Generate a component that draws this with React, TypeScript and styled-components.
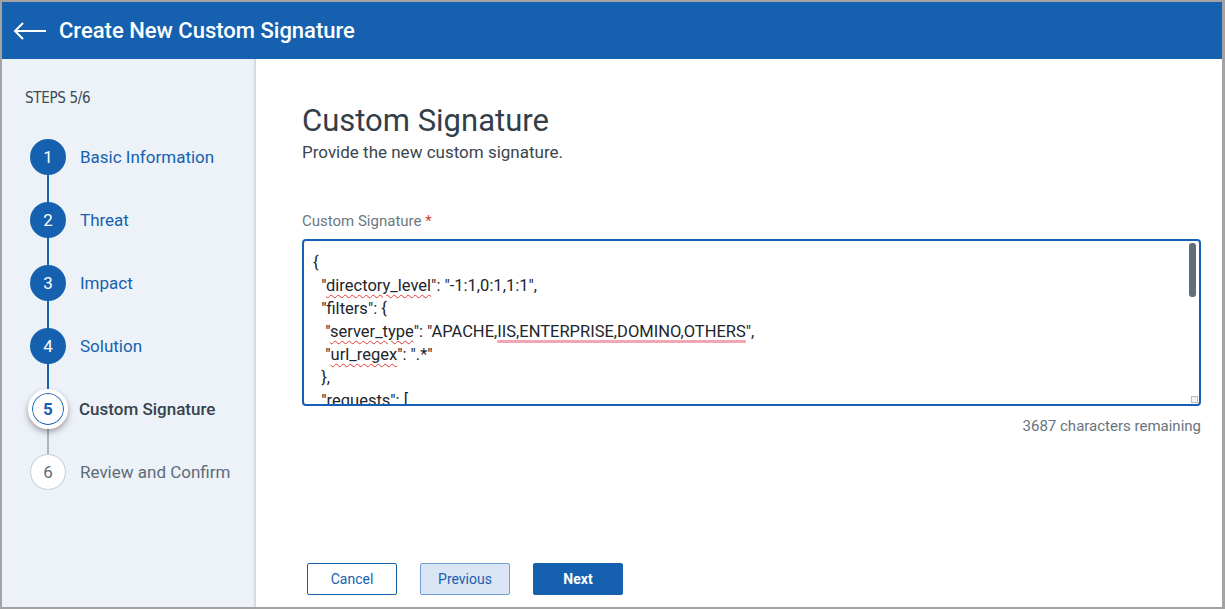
import React from "react";
import styled, { createGlobalStyle } from "styled-components";

const Global = createGlobalStyle`
  html, body { margin: 0; padding: 0; }
  body { font-family: Roboto, "Liberation Sans", sans-serif; background: #fff; }
`;

const Frame = styled.div`
  width: 1225px; height: 609px; box-sizing: border-box;
  border: 2px solid #a3a3a3; border-right-width: 3px;
  display: flex; flex-direction: column; overflow: hidden;
`;
const Header = styled.header`
  height: 57px; background: #1561b0; color: #fff;
  display: flex; align-items: center; gap: 12px; padding-left: 11px;
  font-size: 22px; font-weight: 500; flex-shrink: 0;
`;
const Body = styled.div`display: flex; flex: 1; min-height: 0;`;
const Sidebar = styled.aside`
  width: 254px; background: #edf2f9; flex-shrink: 0;
  box-shadow: inset -3px 0 3px -2px rgba(0,0,0,0.18);
  padding: 30px 0 0 23px; box-sizing: border-box;
`;
const StepsLabel = styled.div`
  font-family: "Liberation Sans Narrow", "DejaVu Sans Condensed", sans-serif;
  font-size: 15px; color: #3c4a55; letter-spacing: -0.3px; margin-bottom: 18px;
`;
const StepList = styled.div`display: flex; flex-direction: column;`;
const Step = styled.div`
  position: relative; display: flex; align-items: center; height: 63px;
`;
const Connector = styled.div<{ $done: boolean }>`
  position: absolute; left: 22px; top: 50%; height: 63px; width: 2px;
  background: ${p => (p.$done ? "#1561b0" : "#aab6c0")};
`;
const Circle = styled.div<{ $state: "done" | "active" | "todo" }>`
  position: relative; z-index: 1;
  width: ${p => (p.$state === "active" ? 40 : 36)}px;
  height: ${p => (p.$state === "active" ? 40 : 36)}px;
  margin-left: ${p => (p.$state === "active" ? 3 : 5)}px;
  margin-right: ${p => (p.$state === "active" ? 11 : 14)}px;
  border-radius: 50%; box-sizing: border-box;
  display: flex; align-items: center; justify-content: center; font-size: 17px;
  background: ${p => (p.$state === "done" ? "#1561b0" : "#fff")};
  color: ${p => (p.$state === "done" ? "#fff" : p.$state === "active" ? "#1561b0" : "#5d6c78")};
  border: ${p => (p.$state === "done" ? "none" : p.$state === "active" ? "4px solid #fff" : "1px solid #c2ccd4")};
  font-weight: ${p => (p.$state === "active" ? 700 : 400)};
  box-shadow: ${p => (p.$state === "active" ? "0 0 0 1px #1561b0 inset, 0 3px 6px rgba(0,0,0,0.35)" : "none")};
`;
const StepText = styled.span<{ $state: "done" | "active" | "todo" }>`
  font-size: 17px;
  color: ${p => (p.$state === "done" ? "#1561b0" : p.$state === "active" ? "#36434d" : "#5d6c78")};
  font-weight: ${p => (p.$state === "active" ? 500 : 400)};
`;
const Main = styled.main`
  flex: 1; padding: 42px 21px 0 46px; display: flex; flex-direction: column;
`;
const Title = styled.h1`
  margin: 0; font-size: 31px; font-weight: 400; color: #333e48; line-height: 40px;
`;
const Sub = styled.p`margin: 0; font-size: 17px; color: #3a454f; line-height: 22px;`;
const Label = styled.label`
  margin-top: 49px; font-size: 15px; color: #6b7883; display: block; margin-bottom: 9px;
  span { color: #d83b2b; }
`;
const Editor = styled.div`
  position: relative; height: 167px; box-sizing: border-box; flex-shrink: 0;
  border: 2px solid #1560b5; border-radius: 4px; overflow: hidden;
  padding: 10px 30px 0 9px; font-size: 16.5px; line-height: 23px; color: #1e252b;
  white-space: pre;
`;
const Wavy = styled.span`
  text-decoration: underline wavy #e53935; text-decoration-thickness: 1px; text-underline-offset: 3px;
`;
const Grammar = styled.span`
  text-decoration: underline #f2a5b3; text-decoration-thickness: 3px; text-underline-offset: 3px;
`;
const Scrollbar = styled.div`
  position: absolute; right: 3px; top: 2px; width: 7px; height: 54px;
  border-radius: 3px; background: #5f707c;
`;
const Grip = styled.div`
  position: absolute; right: 1px; bottom: 1px; width: 5px; height: 5px;
  border: 1px solid #bbb; background: #f4f4f4;
`;
const Counter = styled.div`
  text-align: right; font-size: 15px; color: #67747f; margin-top: 11px;
`;
const Buttons = styled.div`
  margin-top: auto; margin-bottom: 12px; display: flex; gap: 23px; padding-left: 5px;
`;
const Btn = styled.button<{ $kind: "outline" | "soft" | "primary" }>`
  width: 90px; height: 32px; border-radius: 2px; font-family: Roboto, sans-serif; font-size: 14px;
  border: 1px solid ${p => (p.$kind === "soft" ? "#6d9fd6" : "#1561b0")};
  background: ${p => (p.$kind === "primary" ? "#1561b0" : p.$kind === "soft" ? "#dae6f5" : "#fff")};
  color: ${p => (p.$kind === "primary" ? "#fff" : "#1a5fae")};
  font-weight: ${p => (p.$kind === "primary" ? 700 : 400)};
`;

const steps = ["Basic Information", "Threat", "Impact", "Solution", "Custom Signature", "Review and Confirm"];

export default function App() {
  return (
    <>
      <Global />
      <Frame>
        <Header>
          <svg width="34" height="18" viewBox="0 0 34 18" fill="none" stroke="#fff" strokeWidth="2">
            <path d="M33 9H2M10 1L2 9l8 8" />
          </svg>
          Create New Custom Signature
        </Header>
        <Body>
          <Sidebar>
            <StepsLabel>STEPS 5/6</StepsLabel>
            <StepList>
              {steps.map((s, i) => {
                const state = i < 4 ? "done" : i === 4 ? "active" : "todo";
                return (
                  <Step key={s}>
                    {i < 5 && <Connector $done={i < 4} />}
                    <Circle $state={state}>{i + 1}</Circle>
                    <StepText $state={state}>{s}</StepText>
                  </Step>
                );
              })}
            </StepList>
          </Sidebar>
          <Main>
            <Title>Custom Signature</Title>
            <Sub>Provide the new custom signature.</Sub>
            <Label>Custom Signature <span>*</span></Label>
            <Editor>
              {"{\n  \""}<Wavy>directory_level</Wavy>{"\": \"-1:1,0:1,1:1\",\n  \"filters\": {\n   \""}
              <Wavy>server_type</Wavy>{"\": \"APACHE,"}<Grammar>IIS,ENTERPRISE,DOMINO,OTHERS</Grammar>{"\",\n   \""}
              <Wavy>url_regex</Wavy>{"\": \".*\"\n  },\n  \"requests\": [\n   {"}
              <Scrollbar />
              <Grip />
            </Editor>
            <Counter>3687 characters remaining</Counter>
            <Buttons>
              <Btn $kind="outline">Cancel</Btn>
              <Btn $kind="soft">Previous</Btn>
              <Btn $kind="primary">Next</Btn>
            </Buttons>
          </Main>
        </Body>
      </Frame>
    </>
  );
}
